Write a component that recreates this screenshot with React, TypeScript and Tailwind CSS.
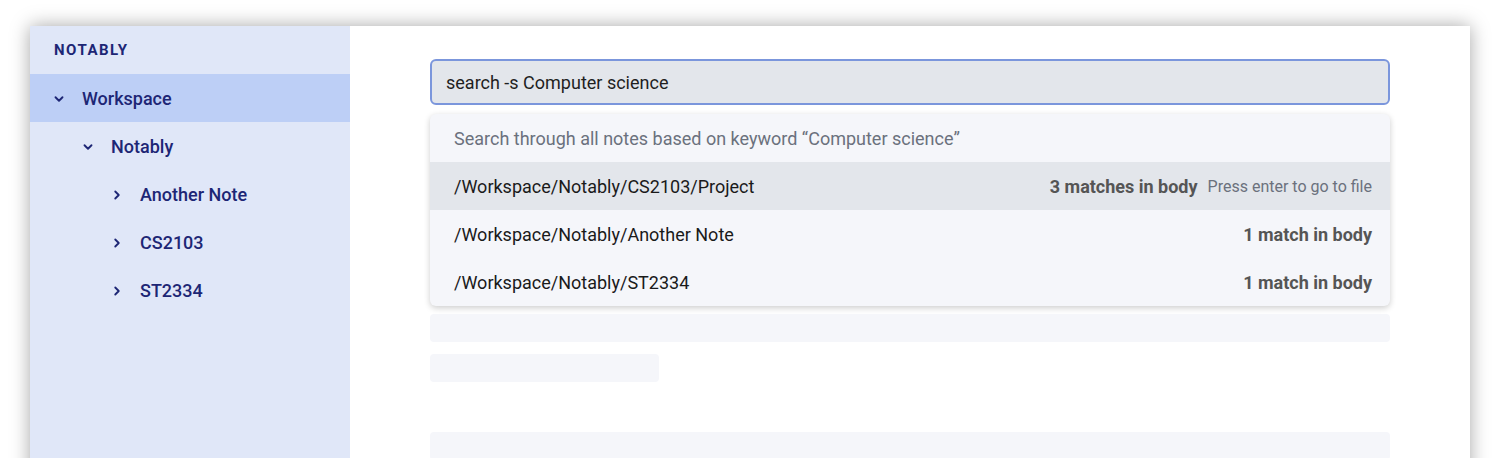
import React from 'react';
import { ChevronDown, ChevronRight } from 'lucide-react';

const results = [
  { path: '/Workspace/Notably/CS2103/Project', matches: '3 matches in body', active: true },
  { path: '/Workspace/Notably/Another Note', matches: '1 match in body', active: false },
  { path: '/Workspace/Notably/ST2334', matches: '1 match in body', active: false },
];

function TreeRow({ label, depth, open, selected }: { label: string; depth: number; open: boolean; selected?: boolean }) {
  return (
    <div
      className={`flex h-12 items-center pt-px text-[18px] font-medium text-[#1d2675] ${selected ? 'bg-[#bdcff6]' : ''}`}
      style={{ paddingLeft: 22 + depth * 29 }}
    >
      <span className="flex w-[30px] items-center">
        {open ? (
          <ChevronDown size={14} strokeWidth={3.2} />
        ) : (
          <ChevronRight size={14} strokeWidth={3.2} />
        )}
      </span>
      <span>{label}</span>
    </div>
  );
}

export default function App() {
  return (
    <div className="h-[458px] overflow-hidden bg-white px-[30px] pt-[26px] font-['Roboto',sans-serif]">
      <div className="flex h-[460px] bg-white shadow-[0_0_18px_rgba(0,0,0,0.35)]">
        {/* Sidebar */}
        <aside className="w-[320px] shrink-0 bg-[#e0e7f8]">
          <div className="flex h-12 items-center pl-6 text-[15px] font-bold tracking-[0.1em] text-[#1d2675]">
            NOTABLY
          </div>
          <TreeRow label="Workspace" depth={0} open selected />
          <TreeRow label="Notably" depth={1} open />
          <TreeRow label="Another Note" depth={2} open={false} />
          <TreeRow label="CS2103" depth={2} open={false} />
          <TreeRow label="ST2334" depth={2} open={false} />
        </aside>

        {/* Main */}
        <main className="flex-1 px-20 pt-[33px]">
          <div className="flex h-[46px] items-center rounded-md border-2 border-[#7b96dc] bg-[#e3e6eb] px-[14px] pt-px text-[18px] text-[#1f1f1f]">
            search -s Computer science
          </div>

          <div className="mt-[9px] overflow-hidden rounded-md bg-[#f5f6fa] shadow-[0_2px_6px_rgba(0,0,0,0.2)]">
            <div className="flex h-12 items-center px-6 pt-px text-[18px] text-[#6b717d]">
              Search through all notes based on keyword “Computer science”
            </div>
            {results.map((r) => (
              <div
                key={r.path}
                className={`flex h-12 items-center justify-between pl-6 pr-[18px] pt-px text-[18px] ${r.active ? 'bg-[#e3e6eb]' : ''}`}
              >
                <span className="text-[#1a1a1a]">{r.path}</span>
                <span className="flex items-center gap-[10px]">
                  <span className="font-bold text-[#555]">{r.matches}</span>
                  {r.active && <span className="text-base text-[#6b717d]">Press enter to go to file</span>}
                </span>
              </div>
            ))}
          </div>

          {/* Placeholder content */}
          <div className="mt-2 h-7 rounded bg-[#f5f6fa]" />
          <div className="mt-3 h-7 w-[229px] rounded bg-[#f5f6fa]" />
          <div className="mt-[50px] h-7 rounded bg-[#f5f6fa]" />
        </main>
      </div>
    </div>
  );
}
